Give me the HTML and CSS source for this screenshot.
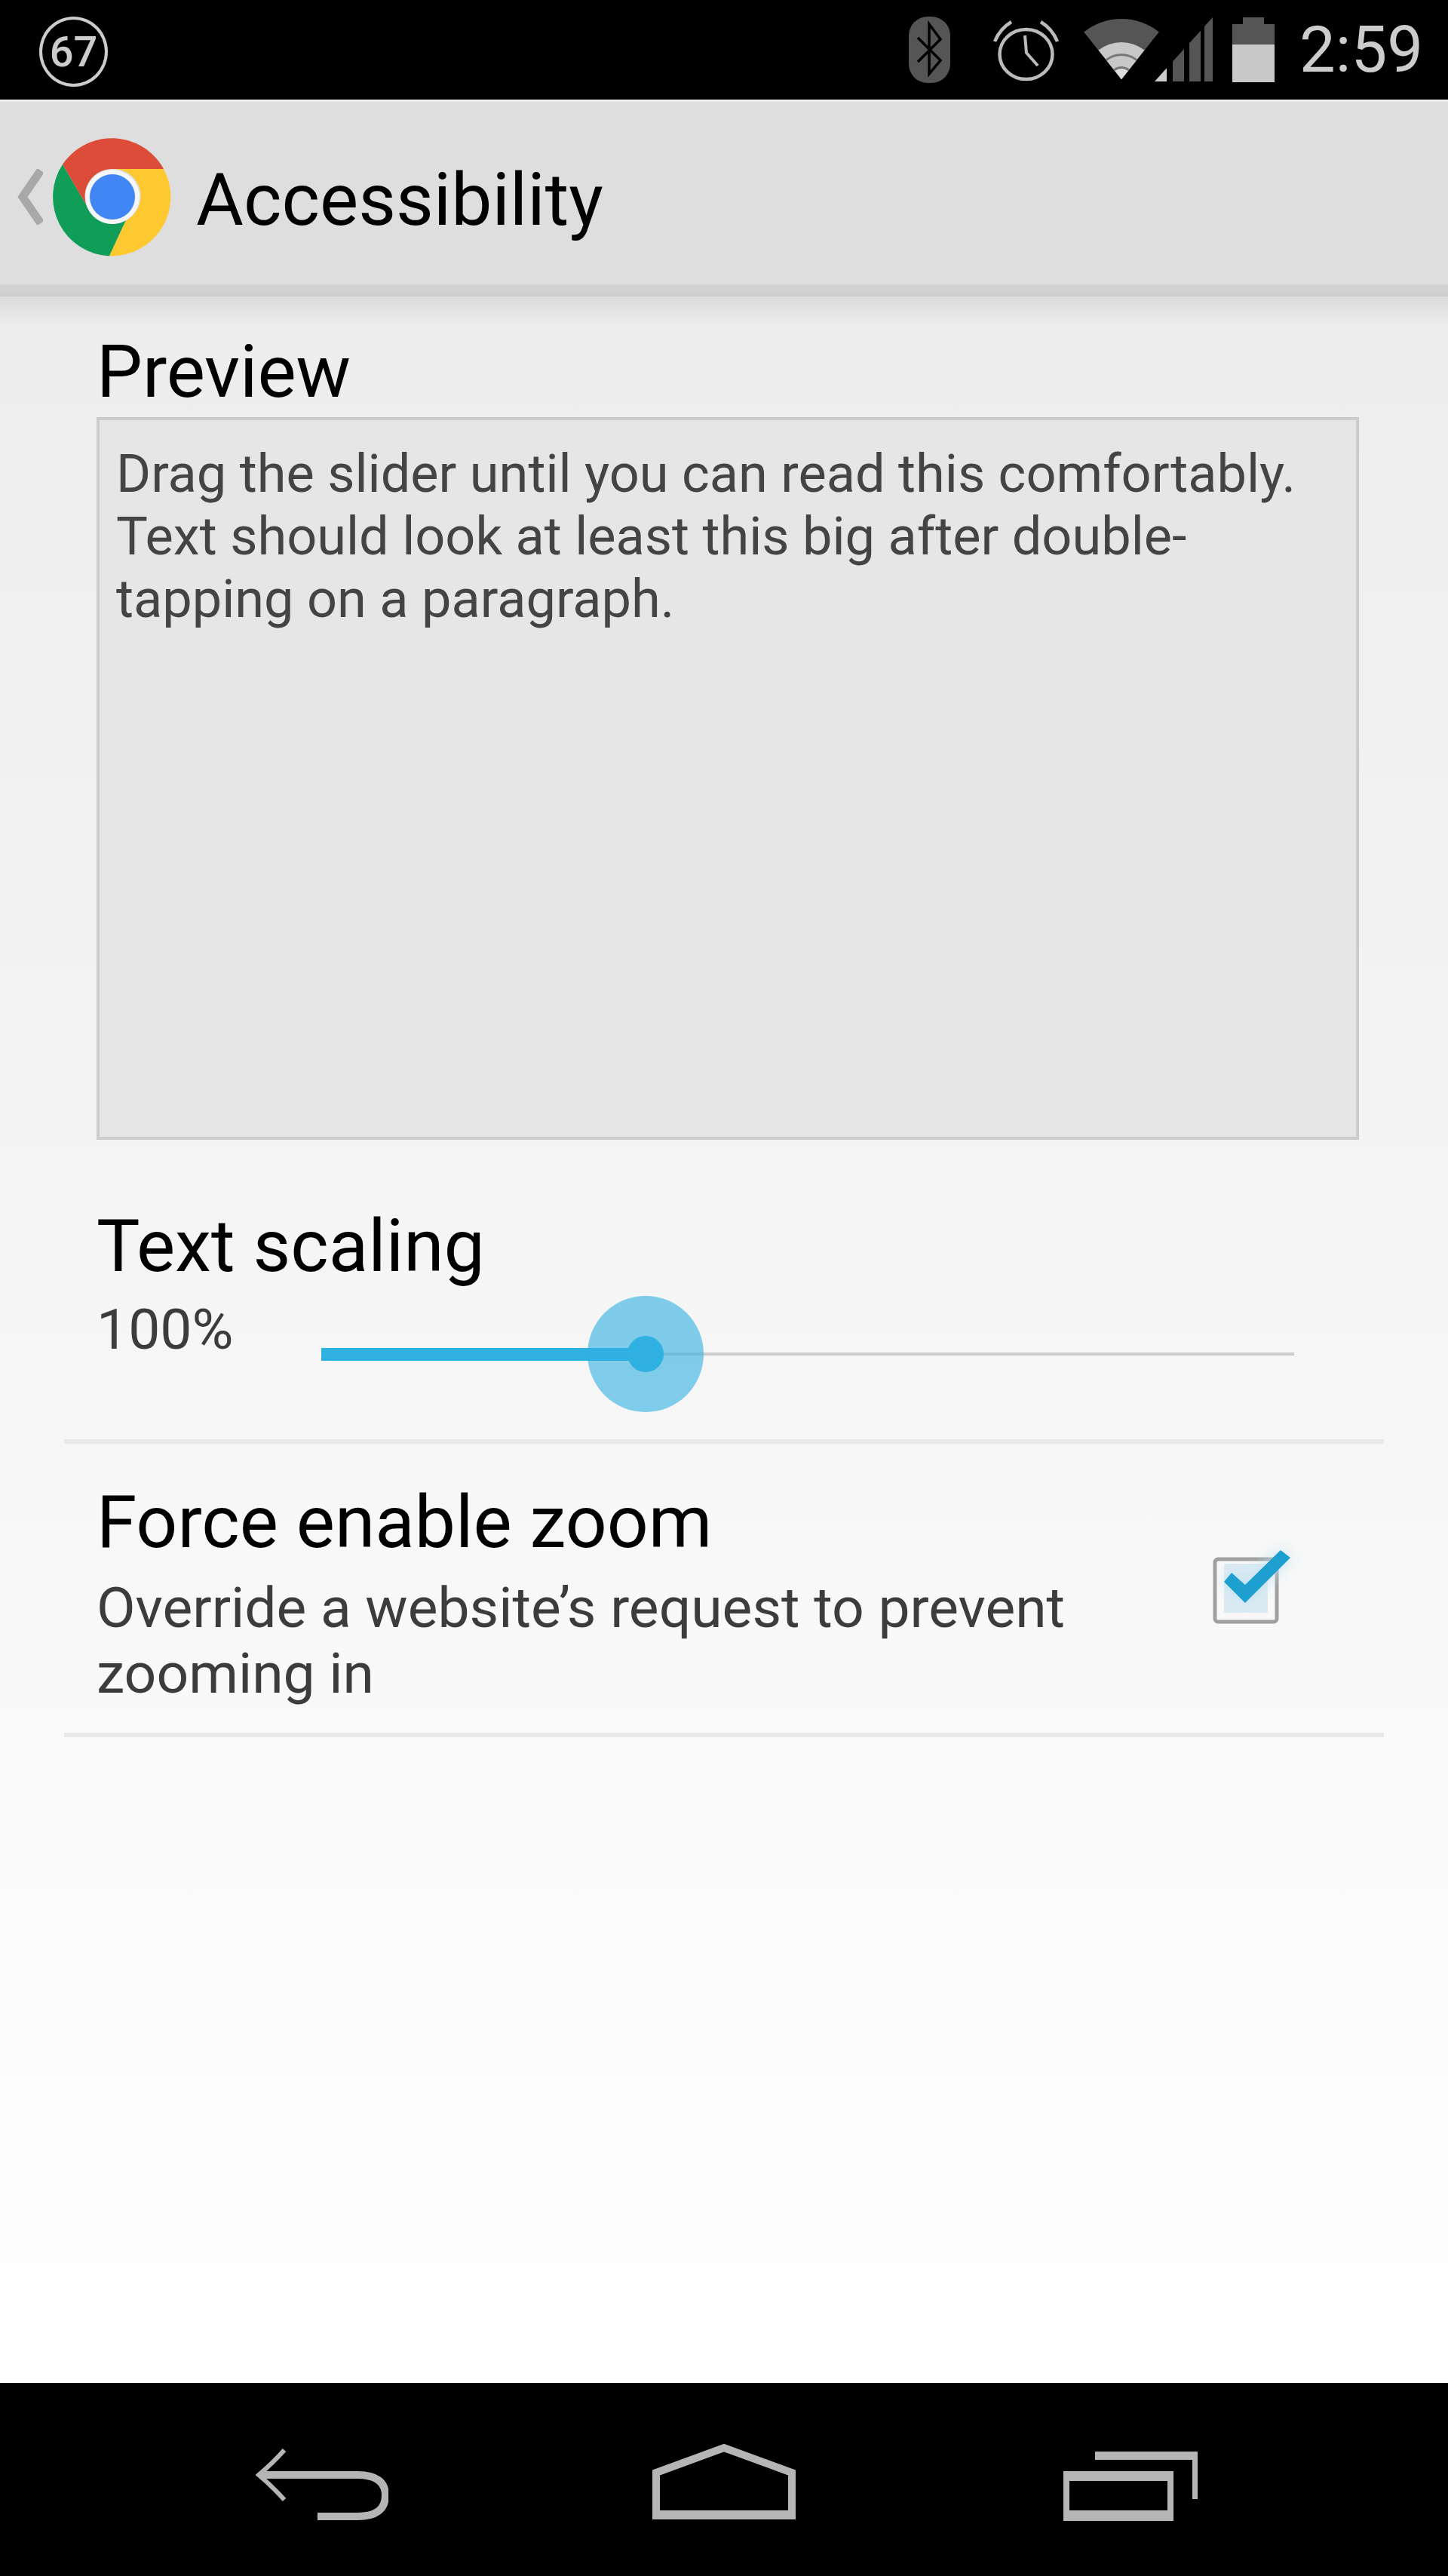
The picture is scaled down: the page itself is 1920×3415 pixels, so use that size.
FILE: index.html
```html
<!DOCTYPE html>
<html lang="en">
<head>
    <meta charset="UTF-8">
    <meta name="viewport" content="width=device-width, initial-scale=1.0">
    <title>Accessibility</title>
    <link rel="stylesheet" href="styles.css">
</head>
<body>

    <div class="statusbar">
        <div class="battery-ring">67</div>
        <div class="status-icons">
            <svg class="ic-bt" width="55" height="88" viewBox="0 0 55 88">
                <rect width="55" height="88" rx="25" fill="#555"/>
                <path d="M12 28 L42 58 L27 76 V10 L42 30 L12 60" fill="none" stroke="#000" stroke-width="3.5"/>
            </svg>
            <svg class="ic-alarm" width="87" height="81" viewBox="0 0 87 81">
                <ellipse cx="43.5" cy="45" rx="35" ry="33" fill="none" stroke="#bbb" stroke-width="4.5"/>
                <path d="M2 28 Q9 11 24 2 M85 28 Q78 11 63 2" fill="none" stroke="#bbb" stroke-width="4.5"/>
                <path d="M42 20 L44 43 L59 60" fill="none" stroke="#bbb" stroke-width="4"/>
            </svg>
            <svg class="ic-net" width="172" height="90" viewBox="0 0 172 90">
                <path d="M51 84 L1.2 21.4 A80 80 0 0 1 100.8 21.4 Z" fill="#555"/>
                <path d="M51 84 L20.5 45.6 A49 49 0 0 1 81.5 45.6 Z" fill="#c8c8c8"/>
                <path d="M51 84 L29.8 57.4 A34 34 0 0 1 72.2 57.4 Z" fill="#777"/>
                <path d="M51 84 L31.7 59.7 A31 31 0 0 1 70.3 59.7 Z" fill="#c8c8c8"/>
                <path d="M51 84 L40.4 70.7 A17 17 0 0 1 61.6 70.7 Z" fill="#777"/>
                <path d="M51 84 L42.3 73 A14 14 0 0 1 59.7 73 Z" fill="#ddd"/>
                <polygon points="95,87 111,69.3 111,87" fill="#ccc"/>
                <polygon points="119,87 119,60.5 134,44 134,87" fill="#555"/>
                <polygon points="141,87 141,36.2 156,19.7 156,87" fill="#555"/>
                <polygon points="161,87 161,14.1 172,2 172,87" fill="#555"/>
            </svg>
            <svg class="ic-battery" width="56" height="86" viewBox="0 0 56 86">
                <rect x="14" width="28" height="10" fill="#555"/>
                <rect y="9" width="56" height="28" fill="#555"/>
                <rect y="36" width="56" height="50" fill="#c8c8c8"/>
            </svg>
            <div class="time">2:59</div>
        </div>
    </div>

    <div class="appbar">
        <svg class="back-chevron" width="34" height="74" viewBox="0 0 34 74">
            <path d="M31 2 L7 37 L31 72" fill="none" stroke="#a8a8a8" stroke-width="11"/>
        </svg>
        <svg class="chrome-logo" width="158" height="158" viewBox="-79 -79 158 158">
            <path d="M-66 -43 A78.5 78.5 0 0 1 68 -37 H0 A36 36 0 0 0 -34 12 Z" fill="#dd4b39"/>
            <path d="M-66 -43 L-34 12 A36 36 0 0 0 18 31 L-4 78.5 A78.5 78.5 0 0 1 -66 -43 Z" fill="#0f9d58"/>
            <path d="M68 -37 A78.5 78.5 0 0 1 -4 78.5 L18 31 A36 36 0 0 0 0 -37 Z" fill="#fdc830"/>
            <circle r="36" fill="#f4f6fa"/>
            <circle r="30" fill="#4285f4"/>
        </svg>
        <div class="appbar-title">Accessibility</div>
    </div>

    <div class="content">
        <div class="preview">
            <div class="row-title">Preview</div>
            <div class="preview-box">Drag the slider until you can read this comfortably.<br>Text should look at least this big after double-<br>tapping on a paragraph.</div>
        </div>

        <div class="scaling">
            <div class="row-title">Text scaling</div>
            <div class="slider-row">
                <div class="row-sub slider-label">100%</div>
                <div class="slider">
                    <div class="slider-fill"></div>
                    <div class="slider-halo"></div>
                    <div class="slider-dot"></div>
                </div>
            </div>
        </div>

        <div class="zoom-row">
            <div class="zoom-text">
                <div class="row-title">Force enable zoom</div>
                <div class="row-sub">Override a website’s request to prevent<br>zooming in</div>
            </div>
            <svg class="checkbox" width="96" height="100" viewBox="0 0 96 100">
                <rect x="15" y="18" width="58" height="65" fill="#dcebf3"/>
                <rect x="3" y="12" width="82" height="83" rx="4" fill="none" stroke="#a0a0a0" stroke-width="5"/>
                <polygon class="check" points="15,42 25,30 43,46 90,0 103,10 43,70" fill="#1d9fd0"/>
            </svg>
        </div>
    </div>

    <div class="navbar">
        <svg width="176" height="110" viewBox="0 0 176 110">
            <path d="M38 10 Q22 28 4 43 Q22 58 38 76" fill="none" stroke="#b5b5b5" stroke-width="6"/>
            <path d="M6 43 H135 Q172 43 172 70 Q172 98 135 98 H82" fill="none" stroke="#b5b5b5" stroke-width="10"/>
        </svg>
        <svg class="nav-home" width="190" height="110" viewBox="0 0 190 110">
            <path d="M5 98 V40 L95 7 L185 40 V98" fill="none" stroke="#b5b5b5" stroke-width="10"/>
            <rect y="90" width="190" height="12" fill="#b5b5b5"/>
        </svg>
        <svg width="178" height="110" viewBox="0 0 178 110">
            <path d="M4 98 V44 H142 V98" fill="none" stroke="#b5b5b5" stroke-width="8"/>
            <rect y="38" width="146" height="13" fill="#b5b5b5"/>
            <rect y="90" width="146" height="14" fill="#b5b5b5"/>
            <rect x="42" y="12" width="136" height="11" fill="#b5b5b5"/>
            <rect x="171" y="12" width="7" height="63" fill="#b5b5b5"/>
        </svg>
    </div>

</body>
</html>
```

FILE: styles.css
```css
body {
    margin: 0;
    width: 1920px;
    height: 3415px;
    display: flex;
    flex-direction: column;
    overflow: hidden;
    font-family: Roboto, "Liberation Sans", sans-serif;
    background-color: #fff;
}
.statusbar {
    height: 132px;
    flex: none;
    display: flex;
    justify-content: space-between;
    align-items: center;
    padding: 0 33px 0 52px;
    background-color: #000;
}
.battery-ring {
    width: 83px;
    height: 85px;
    margin-top: 5px;
    border: 4px solid #ccc;
    border-radius: 50%;
    display: flex;
    align-items: center;
    justify-content: center;
    font-size: 56px;
    font-weight: 500;
    color: #ccc;
}
.status-icons {
    display: flex;
    align-items: center;
}
.ic-bt {
    margin-right: 57px;
}
.ic-alarm {
    margin-right: 32px;
    margin-top: 3px;
}
.ic-net {
    margin-right: 26px;
}
.ic-battery {
    margin-right: 33px;
}
.time {
    font-size: 85px;
    line-height: 86px;
    color: #ccc;
}
.appbar {
    height: 258px;
    flex: none;
    display: flex;
    align-items: center;
    padding-left: 23px;
    border-top: 3px solid #eee;
    background: linear-gradient(#dedede 240px, #d3d3d3 243px, #cdcdcd 258px);
}
.back-chevron,
.chrome-logo {
    margin-bottom: 6px;
}
.chrome-logo {
    margin-left: 13px;
}
.appbar-title {
    margin: 2px 0 0 32px;
    font-size: 96.5px;
    color: #000;
}
.content {
    flex: 1;
    padding: 0 85px;
    background: linear-gradient(#dcdcdc, #ededed 40px, #ffffff 100%);
}
.preview {
    padding: 40px 33px 0 43px;
}
.row-title {
    font-size: 96.5px;
    line-height: 120px;
    color: #000;
}
.row-sub {
    font-size: 75px;
    line-height: 87px;
    color: #3c3c3c;
}
.preview-box {
    padding: 30px 22px;
    box-sizing: border-box;
    height: 958px;
    border: 4px solid #ccc;
    background-color: #e6e6e6;
    font-size: 70.3px;
    line-height: 83px;
    color: #444;
}
.scaling {
    padding: 81px 43px 0;
    height: 403px;
    box-sizing: border-box;
    border-bottom: 6px solid #e8e8e8;
}
.slider-row {
    display: flex;
    align-items: flex-start;
}
.slider-label {
    width: 180px;
    margin-top: 7px;
}
.slider {
    position: relative;
    width: 1290px;
    height: 4px;
    margin: 81px 0 0 118px;
    background-color: #ccc;
}
.slider-fill {
    width: 430px;
    height: 17px;
    position: relative;
    top: -6px;
    background-color: #2fb1e2;
}
.slider-halo {
    position: absolute;
    left: 353px;
    top: -75px;
    width: 154px;
    height: 154px;
    border-radius: 50%;
    background-color: #2fb1e2;
    opacity: 0.6;
}
.slider-dot {
    position: absolute;
    left: 406px;
    top: -22px;
    width: 48px;
    height: 48px;
    border-radius: 50%;
    background-color: #2fb1e2;
}
.zoom-row {
    display: flex;
    justify-content: space-between;
    height: 389px;
    box-sizing: border-box;
    padding: 44px 43px 0;
    border-bottom: 6px solid #e8e8e8;
}
.zoom-text .row-sub {
    margin-top: 10px;
}
.checkbox {
    margin: 97px 88px 0 0;
    overflow: visible;
}
.check {
    filter: drop-shadow(0 0 9px #bfe3f2);
}
.nav-home {
    margin-right: 5px;
}
.navbar {
    height: 256px;
    flex: none;
    display: flex;
    justify-content: space-between;
    align-items: flex-start;
    box-sizing: border-box;
    padding: 79px 332px 0 339px;
    background-color: #000;
}
```
